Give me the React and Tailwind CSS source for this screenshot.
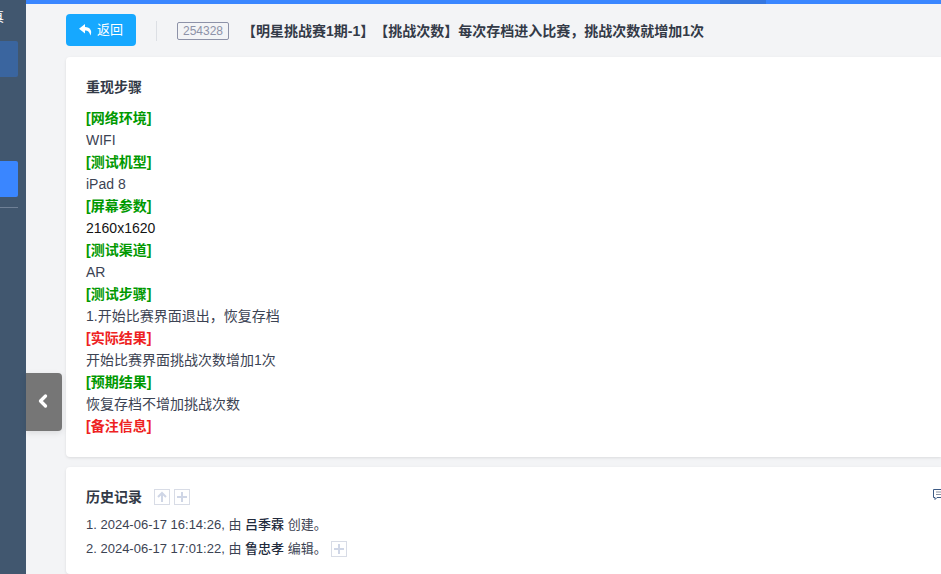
import { ChevronLeft } from 'lucide-react';

const font = { fontFamily: '"Liberation Sans", "Noto Sans CJK SC", sans-serif' };

const rows = [
  ['[网络环境]', 'green'],
  ['WIFI', 'gray'],
  ['[测试机型]', 'green'],
  ['iPad 8', 'gray'],
  ['[屏幕参数]', 'green'],
  ['2160x1620', 'dark'],
  ['[测试渠道]', 'green'],
  ['AR', 'gray'],
  ['[测试步骤]', 'green'],
  ['1.开始比赛界面退出，恢复存档', 'gray'],
  ['[实际结果]', 'red'],
  ['开始比赛界面挑战次数增加1次', 'gray'],
  ['[预期结果]', 'green'],
  ['恢复存档不增加挑战次数', 'gray'],
  ['[备注信息]', 'red'],
];

const rowClass = {
  green: 'font-bold text-[#009900]',
  red: 'font-bold text-[#ee2222]',
  gray: 'text-[#3c4353]',
  dark: 'text-[#141414]',
};

function SmallBox({ children }) {
  return (
    <span className="flex h-4 w-4 items-center justify-center border border-[#d8dce6] text-[#cfd6e6]">
      {children}
    </span>
  );
}

const Plus = () => (
  <svg width="12" height="12" viewBox="0 0 12 12" fill="none" stroke="currentColor" strokeWidth="2">
    <path d="M6 1v10M1 6h10" />
  </svg>
);

const Up = () => (
  <svg width="12" height="12" viewBox="0 0 12 12" fill="none" stroke="currentColor" strokeWidth="2">
    <path d="M6 11V2M2 6l4-4 4 4" />
  </svg>
);

export default function App() {
  return (
    <div style={font} className="relative flex h-[574px] w-[941px] overflow-hidden bg-[#f3f4f6] text-[14px] [text-spacing-trim:space-all]">
      {/* Sidebar */}
      <div className="relative w-[26px] shrink-0 overflow-hidden bg-[#41576f]">
        <div className="h-[41px] pt-[9px] text-[13px] leading-4 text-white">
          <span className="ml-[-9px] inline-block">真</span>
        </div>
        <div className="h-9 w-[18px] rounded-r-[2px] bg-[#3a659f]" />
        <div className="h-[84px]" />
        <div className="h-9 w-[18px] rounded-r-[2px] bg-[#3a86ff]" />
        <div className="mt-[10px] h-px w-[18px] bg-[#6f8096]" />
      </div>

      {/* Main */}
      <div className="flex min-w-0 flex-1 flex-col">
        <div className="flex h-1 shrink-0">
          <div className="w-[694px] bg-[#3a86ff]" />
          <div className="w-[46px] bg-[#3577e0]" />
          <div className="flex-1 bg-[#3a86ff]" />
        </div>

        {/* Title row */}
        <div className="flex h-[53px] shrink-0 items-start pl-10 pt-[10px]">
          <button className="flex h-8 w-[70px] items-center justify-center gap-1 rounded bg-[#16a8ff] text-[13px] text-white">
            <svg width="14" height="12" viewBox="0 0 14 12" fill="currentColor">
              <path d="M6 0 0 4.8l6 4.6V6.6c2.8 0 4.4 1.2 5.4 4.9C13.6 7 11.4 3 6 2.9z" />
            </svg>
            返回
          </button>
          <span className="ml-5 mt-[7px] h-[20px] w-px bg-[#dcdfe4]" />
          <span className="ml-5 mt-2 flex h-[18px] w-[52px] items-center justify-center rounded-[2px] border border-[#8d92a8] text-[12px] text-[#8d92a8]">
            254328
          </span>
          <span className="ml-[13px] mt-[8px] text-[14px] leading-[18px] font-bold text-[#333a47]">
            【明星挑战赛1期-1】【挑战次数】每次存档进入比赛，挑战次数就增加1次
          </span>
        </div>

        {/* Steps card */}
        <div className="ml-10 shrink-0 rounded-l bg-white pt-[20px] pb-[20px] pl-5 shadow-[0_1px_3px_rgba(0,0,0,0.1)]">
          <h3 className="text-[14px] leading-5 font-bold text-[#333a47]">重现步骤</h3>
          <div className="mt-[10px]">
            {rows.map(([text, kind]) => (
              <div key={text} className={`h-[22px] leading-[22px] ${rowClass[kind]}`}>
                {text}
              </div>
            ))}
          </div>
        </div>

        {/* History card */}
        <div className="mt-[10px] ml-10 flex-1 rounded-l bg-white pt-[20px] pl-5 shadow-[0_1px_3px_rgba(0,0,0,0.1)]">
          <div className="flex h-5 items-center justify-between">
            <div className="flex items-center gap-1">
              <h3 className="mr-2 text-[14px] font-bold text-[#333a47]">历史记录</h3>
              <SmallBox><Up /></SmallBox>
              <SmallBox><Plus /></SmallBox>
            </div>
            <svg width="8" height="12" viewBox="0 0 8 12" className="mb-1" fill="none">
              <path d="M.5.5H8M.5.5v8H2v2l2-2h4" stroke="#3c5a84" />
              <path d="M3 3h5M3 5.5h5" stroke="#8a93a3" />
            </svg>
          </div>
          <div className="mt-[6px] h-6 text-[13px] leading-6 text-[#3c4353]">
            1. 2024-06-17 16:14:26, 由 <span className="font-medium text-[#222a3c]">吕季霖</span> 创建。
          </div>
          <div className="flex h-6 items-center gap-1 text-[13px] leading-6 text-[#3c4353]">
            <span>
              2. 2024-06-17 17:01:22, 由 <span className="font-medium text-[#222a3c]">鲁忠孝</span> 编辑。
            </span>
            <SmallBox><Plus /></SmallBox>
          </div>
        </div>
      </div>

      {/* Collapse tab over the content */}
      <button className="absolute top-[373px] left-[26px] flex h-[58px] w-9 items-center justify-center rounded-r bg-[#767676] pr-[2px] pb-[2px] text-white shadow-[0_2px_6px_rgba(0,0,0,0.1)]">
        <ChevronLeft size={20} strokeWidth={4} />
      </button>
    </div>
  );
}
